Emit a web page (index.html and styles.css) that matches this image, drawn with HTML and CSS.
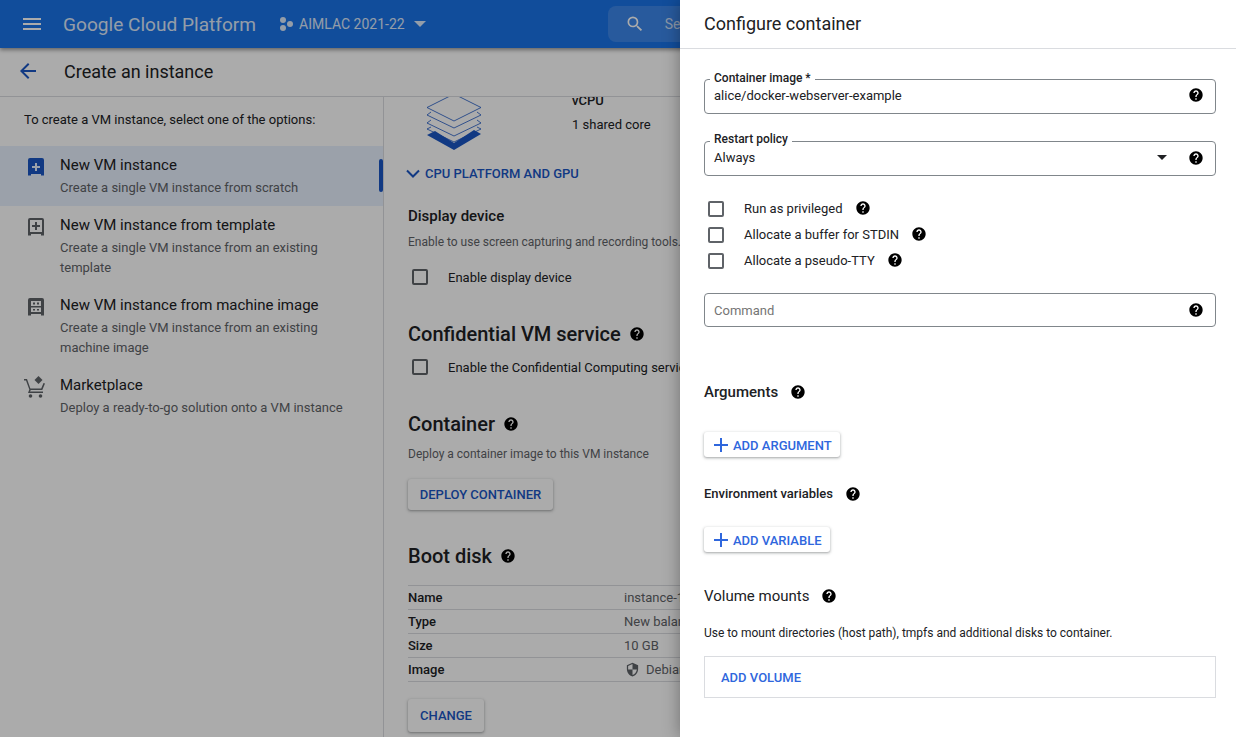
FILE: index.html
```html
<!DOCTYPE html>
<html lang="en">
<head>
    <meta charset="UTF-8">
    <title>Create an instance</title>
    <link rel="stylesheet" href="styles.css">
</head>
<body>
    <svg class="sprite" width="0" height="0">
        <symbol id="help" viewBox="0 0 24 24"><path d="M12 2C6.48 2 2 6.48 2 12s4.48 10 10 10 10-4.48 10-10S17.52 2 12 2zm1 17h-2v-2h2v2zm2.07-7.75l-.9.92C13.45 12.9 13 13.5 13 15h-2v-.5c0-1.1.45-2.1 1.17-2.83l1.24-1.26c.37-.36.59-.86.59-1.41 0-1.1-.9-2-2-2s-2 .9-2 2H8c0-2.21 1.79-4 4-4s4 1.79 4 4c0 .88-.36 1.68-.93 2.25z"/></symbol>
        <symbol id="plus" viewBox="0 0 24 24"><path d="M19 13h-6v6h-2v-6H5v-2h6V5h2v6h6v2z"/></symbol>
    </svg>

    <!-- top bar -->
    <header class="topbar">
        <svg class="menu-icon" viewBox="0 0 24 24"><path d="M3 18h18v-2H3v2zm0-5h18v-2H3v2zm0-7v2h18V6H3z"/></svg>
        <span class="brand">Google Cloud Platform</span>
        <svg class="project-icon" viewBox="0 0 16 16"><circle cx="4" cy="4" r="3"/><circle cx="11" cy="8" r="3"/><circle cx="4" cy="12" r="3"/></svg>
        <span class="project-name">AIMLAC 2021-22</span>
        <span class="caret"></span>
        <div class="search">
            <svg class="search-icon" viewBox="0 0 24 24"><path d="M15.5 14h-.79l-.28-.27A6.47 6.47 0 0 0 16 9.5 6.5 6.5 0 1 0 9.5 16c1.61 0 3.09-.59 4.23-1.57l.27.28v.79l5 4.99L20.49 19l-4.99-5zm-6 0C7.01 14 5 11.99 5 9.5S7.01 5 9.5 5 14 7.01 14 9.5 11.99 14 9.5 14z"/></svg>
            <span>Search</span>
        </div>
    </header>

    <!-- page title -->
    <div class="titlebar">
        <svg class="back-icon" viewBox="0 0 24 24"><path d="M20 11H7.83l5.59-5.59L12 4l-8 8 8 8 1.41-1.41L7.83 13H20v-2z"/></svg>
        <h1>Create an instance</h1>
    </div>

    <div class="page">
        <!-- left options -->
        <aside class="sidebar">
            <p class="intro">To create a VM instance, select one of the options:</p>
            <div class="option selected">
                <svg class="option-icon" viewBox="0 0 24 24"><path d="M6 3h12a2 2 0 0 1 2 2v15.5h-3V19H7v1.5H4V5a2 2 0 0 1 2-2zm5 5v3H8v2h3v3h2v-3h3v-2h-3V8h-2z"/></svg>
                <div>
                    <div class="option-title">New VM instance</div>
                    <div class="option-desc">Create a single VM instance from scratch</div>
                </div>
            </div>
            <div class="option">
                <svg class="option-icon" viewBox="0 0 24 24"><path d="M6 3h12a2 2 0 0 1 2 2v15.5h-3V19H7v1.5H4V5a2 2 0 0 1 2-2zm0 2v12h12V5H6zm5 2h2v3h3v2h-3v3h-2v-3H8v-2h3V7z"/></svg>
                <div>
                    <div class="option-title">New VM instance from template</div>
                    <div class="option-desc">Create a single VM instance from an existing template</div>
                </div>
            </div>
            <div class="option">
                <svg class="option-icon" viewBox="0 0 24 24"><path fill-rule="evenodd" d="M6 3h12a2 2 0 0 1 2 2v15.5h-3V19H7v1.5H4V5a2 2 0 0 1 2-2zm1 3v5h10V6H7zm2 1.500v2h2v-2H9zm4 0v2h2v-2h-2zM7 12.500V17h10v-4.500H7zm2 1.500h2v1.500H9V14zm4 0h2v1.500h-2V14z"/></svg>
                <div>
                    <div class="option-title">New VM instance from machine image</div>
                    <div class="option-desc">Create a single VM instance from an existing machine image</div>
                </div>
            </div>
            <div class="option">
                <svg class="option-icon cart" viewBox="0 0 24 24"><path d="M15.500 1l4 4-4 4-4-4 4-4zM1 4h3l3.400 9.500h10.800l2.300-5.500 1.500.6-2.700 6.400H7.800L7 16.500h13V18H5l1.300-3.500L3 5.500H1V4z"/><circle cx="7.500" cy="21" r="1.800"/><circle cx="17.500" cy="21" r="1.800"/></svg>
                <div>
                    <div class="option-title">Marketplace</div>
                    <div class="option-desc">Deploy a ready-to-go solution onto a VM instance</div>
                </div>
            </div>
        </aside>

        <!-- instance form, scrolled part way down -->
        <main class="content">
            <div class="machine">
                <svg class="chip" viewBox="0 0 56 54">
                    <g fill="none" stroke="#1a56c4" stroke-width="0.8">
                        <path d="M28 -3L55 10.500 28 24 1 10.500z"/>
                        <path d="M5 15L1 18 28 31 55 18 51 15"/>
                        <path d="M5 23L1 26 28 39 55 26 51 23"/>
                        <path d="M5 30L1 32 28 45 55 32 51 30"/>
                    </g>
                    <path d="M1 38L9 34 28 46 48 33 55 37 28 53z" fill="#1a56c4"/>
                </svg>
                <div class="machine-info">
                    <div class="machine-label">vCPU</div>
                    <div class="machine-value">1 shared core</div>
                </div>
            </div>
            <div class="expander">
                <svg viewBox="0 0 14 9"><path d="M1 1.500L7 7.500 13 1.500"/></svg>
                <span>CPU PLATFORM AND GPU</span>
            </div>

            <h3 class="sub-title">Display device</h3>
            <p class="hint">Enable to use screen capturing and recording tools.</p>
            <label class="check-row"><span class="checkbox"></span>Enable display device</label>

            <h2 class="section-title confidential">Confidential VM service <svg class="help"><use href="#help"/></svg></h2>
            <label class="check-row compact"><span class="checkbox"></span>Enable the Confidential Computing service on this VM instance</label>

            <h2 class="section-title container-title">Container <svg class="help"><use href="#help"/></svg></h2>
            <p class="hint tight">Deploy a container image to this VM instance</p>
            <button class="raised deploy">DEPLOY CONTAINER</button>

            <h2 class="section-title boot">Boot disk <svg class="help"><use href="#help"/></svg></h2>
            <table class="disk">
                <tr><th>Name</th><td>instance-1</td></tr>
                <tr><th>Type</th><td>New balanced persistent disk</td></tr>
                <tr><th>Size</th><td>10 GB</td></tr>
                <tr><th>Image</th><td><svg class="shield" viewBox="0 0 24 24"><path d="M12 1L3 5v6c0 5.550 3.840 10.740 9 12 5.160-1.260 9-6.450 9-12V5l-9-4zm0 10.990h7c-.530 4.120-3.280 7.790-7 8.940V12H5V6.300l7-3.110v8.800z"/></svg>Debian GNU/Linux 10 (buster)</td></tr>
            </table>
            <button class="raised change">CHANGE</button>
        </main>
    </div>

    <div class="scrim"></div>

    <!-- side panel -->
    <section class="drawer">
        <div class="drawer-head">Configure container</div>
        <div class="drawer-body">
            <div class="field first">
                <span class="field-label">Container image *</span>
                <span class="field-value">alice/docker-webserver-example</span>
                <svg class="help"><use href="#help"/></svg>
            </div>
            <div class="field second">
                <span class="field-label">Restart policy</span>
                <span class="field-value">Always</span>
                <span class="select-caret"></span>
                <svg class="help"><use href="#help"/></svg>
            </div>

            <div class="checks">
                <label class="check-line"><span class="checkbox"></span>Run as privileged <svg class="help"><use href="#help"/></svg></label>
                <label class="check-line"><span class="checkbox"></span>Allocate a buffer for STDIN <svg class="help"><use href="#help"/></svg></label>
                <label class="check-line"><span class="checkbox"></span>Allocate a pseudo-TTY <svg class="help"><use href="#help"/></svg></label>
            </div>

            <div class="field third">
                <span class="field-value placeholder">Command</span>
                <svg class="help"><use href="#help"/></svg>
            </div>

            <h4 class="panel-title args">Arguments <svg class="help"><use href="#help"/></svg></h4>
            <button class="add-btn"><svg viewBox="0 0 24 24"><use href="#plus"/></svg>ADD ARGUMENT</button>

            <h5 class="panel-small">Environment variables <svg class="help"><use href="#help"/></svg></h5>
            <button class="add-btn"><svg viewBox="0 0 24 24"><use href="#plus"/></svg>ADD VARIABLE</button>

            <h4 class="panel-title volumes">Volume mounts <svg class="help"><use href="#help"/></svg></h4>
            <p class="panel-hint">Use to mount directories (host path), tmpfs and additional disks to container.</p>
            <div class="add-volume">ADD VOLUME</div>
        </div>
    </section>
</body>
</html>
```

FILE: styles.css
```css
* {
    box-sizing: border-box;
}
html, body {
    height: 100%;
}
body {
    margin: 0;
    overflow: hidden;
    background: #fff;
    color: #202124;
    font-family: Roboto, "Liberation Sans", sans-serif;
    font-size: 13px;
}
.sprite {
    position: absolute;
}
.help {
    width: 16px;
    height: 16px;
    fill: #000;
    flex: none;
}

/* top bar */
.topbar {
    height: 48px;
    display: flex;
    align-items: center;
    background: #1a73e8;
    color: #fff;
    box-shadow: 0 2px 4px rgba(0, 0, 0, 0.4);
    position: relative;
    overflow: hidden;
}
.menu-icon {
    width: 24px;
    height: 24px;
    margin-left: 20px;
    fill: #fff;
    flex: none;
}
.brand {
    margin-left: 19px;
    font-size: 19.100px;
    white-space: nowrap;
    opacity: 0.85;
}
.project-icon {
    width: 16px;
    height: 16px;
    margin-left: 23px;
    fill: #fff;
    opacity: 0.85;
    flex: none;
}
.project-name {
    margin-left: 4px;
    font-size: 14px;
    white-space: nowrap;
    opacity: 0.85;
}
.caret {
    margin-left: 9px;
    border-left: 6px solid transparent;
    border-right: 6px solid transparent;
    border-top: 6px solid #fff;
    opacity: 0.85;
}
.search {
    margin-left: 182px;
    width: 560px;
    height: 36px;
    display: flex;
    align-items: center;
    background: rgba(255, 255, 255, 0.15);
    border-radius: 8px;
    flex: none;
    font-size: 14px;
    white-space: nowrap;
    color: rgba(255, 255, 255, 0.75);
}
.search-icon {
    width: 20px;
    height: 20px;
    margin: 0 20px 0 17px;
    fill: #fff;
}

/* title row */
.titlebar {
    height: 49px;
    display: flex;
    align-items: center;
    padding-bottom: 2px;
    border-bottom: 1px solid #dadce0;
}
.back-icon {
    width: 24px;
    height: 24px;
    margin-left: 16px;
    fill: #1a56c4;
}
.titlebar h1 {
    margin: 0 0 0 24px;
    font-size: 18px;
    font-weight: 400;
    color: #202124;
}

.page {
    display: flex;
    width: 680px;
    height: 640px;
}

/* left options */
.sidebar {
    width: 384px;
    flex: none;
    border-right: 1px solid #dadce0;
}
.intro {
    margin: 0;
    padding: 14px 24px 0;
    height: 49px;
    font-size: 13px;
    line-height: 18px;
}
.option {
    display: flex;
    gap: 12px;
    padding: 9px 24px 8px 24px;
    position: relative;
}
.option.selected {
    background: #e8f0fe;
}
.option.selected::after {
    content: "";
    position: absolute;
    right: 0;
    top: 13px;
    width: 4px;
    height: 33px;
    border-radius: 2px;
    background: #1a56c4;
}
.option-icon {
    width: 24px;
    height: 24px;
    fill: #5f6368;
    flex: none;
    margin-left: 0;
}
.option.selected .option-icon {
    fill: #1a56c4;
}
.option-icon.cart {
    margin-left: -1px;
    margin-right: 1px;
}
.option-title {
    font-size: 15px;
    line-height: 20px;
    margin-bottom: 3px;
}
.option-desc {
    font-size: 13px;
    line-height: 20px;
    color: #5f6368;
    max-width: 290px;
}

/* instance form */
.content {
    flex: 1;
    min-width: 0;
    padding-left: 24px;
    overflow: hidden;
    white-space: nowrap;
}
.machine {
    display: flex;
    height: 54px;
    overflow: hidden;
    padding-left: 18px;
}
.chip {
    width: 56px;
    height: 54px;
    flex: none;
}
.machine-info {
    margin-left: 90px;
    margin-top: -8px;
    font-size: 13px;
    line-height: 24px;
}
.machine-label {
    font-weight: 500;
}
.expander {
    display: flex;
    align-items: center;
    gap: 5px;
    margin: 13px 0 0 -2px;
    height: 18px;
    color: #1a56c4;
    font-size: 13px;
    font-weight: 500;
}
.expander svg {
    width: 14px;
    height: 9px;
    fill: none;
    stroke: #1a56c4;
    stroke-width: 2;
}
.sub-title {
    margin: 24px 0 0;
    font-size: 15px;
    line-height: 20px;
    font-weight: 500;
}
.hint {
    margin: 8px 0 0;
    font-size: 12px;
    line-height: 16px;
    color: #5f6368;
}
.hint.tight {
    margin-top: 9px;
}
.check-row {
    display: flex;
    align-items: center;
    gap: 20px;
    margin: 18px 0 0 4px;
    height: 18px;
    font-size: 13px;
}
.check-row.compact {
    margin-top: 11px;
}
.checkbox {
    width: 16px;
    height: 16px;
    border: 2px solid #5f6368;
    border-radius: 2px;
    flex: none;
}
.section-title {
    display: flex;
    align-items: center;
    gap: 8px;
    margin: 0;
    font-size: 20px;
    line-height: 26px;
    font-weight: 500;
}
.section-title.confidential {
    margin-top: 35px;
}
.section-title.container-title {
    margin-top: 35px;
    gap: 8px;
}
.section-title.boot {
    margin-top: 33px;
}
.raised {
    display: block;
    border: 0;
    background: #fff;
    color: #1a56c4;
    font: 500 13px Roboto, sans-serif;
    border-radius: 3px;
    box-shadow: 0 1px 2px rgba(60, 64, 67, 0.3), 0 1px 3px 1px rgba(60, 64, 67, 0.15);
}
.deploy {
    width: 145px;
    height: 31px;
    margin-top: 17px;
}
.change {
    width: 76px;
    height: 33px;
    margin-top: 17px;
}
.disk {
    width: 700px;
    margin-top: 16px;
    border-collapse: collapse;
    border-top: 1px solid #dadce0;
}
.disk tr {
    height: 24px;
    border-bottom: 1px solid #dadce0;
}
.disk th {
    width: 216px;
    padding: 0;
    text-align: left;
    font-size: 13px;
    font-weight: 500;
}
.disk td {
    padding: 0;
    font-size: 13px;
    color: #5f6368;
}
.shield {
    width: 15px;
    height: 15px;
    fill: #5f6368;
    margin: 0 6px 0 1px;
    vertical-align: -3px;
}

/* overlay and panel */
.scrim {
    position: absolute;
    inset: 0;
    background: rgba(0, 0, 0, 0.33);
}
.drawer {
    position: absolute;
    top: 0;
    right: 0;
    bottom: 0;
    width: 556px;
    background: #fff;
    box-shadow: 0 0 16px rgba(0, 0, 0, 0.35);
    color: #202124;
}
.drawer-head {
    height: 49px;
    padding: 12px 24px 0;
    font-size: 18px;
    line-height: 24px;
    border-bottom: 1px solid #dadce0;
}
.drawer-body {
    padding: 0 20px 0 24px;
}
.field {
    position: relative;
    display: flex;
    align-items: center;
    border: 1px solid #80868b;
    border-radius: 4px;
    padding: 0 11px 0 9px;
    font-size: 13px;
}
.field.first {
    height: 35px;
    margin-top: 30px;
    padding-bottom: 3px;
}
.field.second {
    height: 35px;
    margin-top: 27px;
    padding-bottom: 2px;
}
.field.third {
    height: 34px;
    margin-top: 19px;
}
.field-label {
    position: absolute;
    top: -10px;
    left: 5px;
    padding: 0 4px;
    background: #fff;
    font-size: 12px;
    line-height: 16px;
    font-weight: 500;
}
.second .field-label {
    top: -11px;
}
.field-value {
    flex: 1;
}
.placeholder {
    color: #757575;
}
.select-caret {
    margin-right: 21px;
    border-left: 5px solid transparent;
    border-right: 5px solid transparent;
    border-top: 5px solid #202124;
}
.checks {
    margin-top: 20px;
}
.check-line {
    display: flex;
    align-items: center;
    height: 26px;
    padding-bottom: 2px;
    font-size: 13px;
}
.check-line .checkbox {
    margin: 2px 20px 0 4px;
}
.check-line .help {
    margin-left: 12px;
}
.panel-title {
    display: flex;
    align-items: center;
    gap: 12px;
    margin: 0;
    font-size: 15px;
    line-height: 20px;
}
.panel-title.args {
    margin-top: 55px;
    font-weight: 500;
}
.panel-title.volumes {
    margin-top: 34px;
    font-weight: 400;
}
.panel-small {
    display: flex;
    align-items: center;
    gap: 12px;
    margin: 27px 0 0;
    font-size: 13px;
    line-height: 20px;
    font-weight: 500;
}
.add-btn {
    display: flex;
    align-items: center;
    height: 25px;
    margin-top: 30px;
    padding: 1px 8px 0 5px;
    border: 0;
    border-radius: 3px;
    background: #fff;
    color: #2f67dd;
    font: 500 13px Roboto, sans-serif;
    box-shadow: 0 1px 2px rgba(60, 64, 67, 0.3), 0 1px 3px 1px rgba(60, 64, 67, 0.15);
}
.panel-small + .add-btn {
    margin-top: 23px;
}
.add-btn svg {
    width: 24px;
    height: 24px;
    fill: #2f67dd;
}
.panel-hint {
    margin: 19px 0 0;
    font-size: 12px;
    line-height: 16px;
}
.add-volume {
    height: 42px;
    margin-top: 15px;
    padding-left: 16px;
    display: flex;
    align-items: center;
    border: 1px solid #dadce0;
    color: #2f67dd;
    font-size: 13px;
    font-weight: 500;
}
```
